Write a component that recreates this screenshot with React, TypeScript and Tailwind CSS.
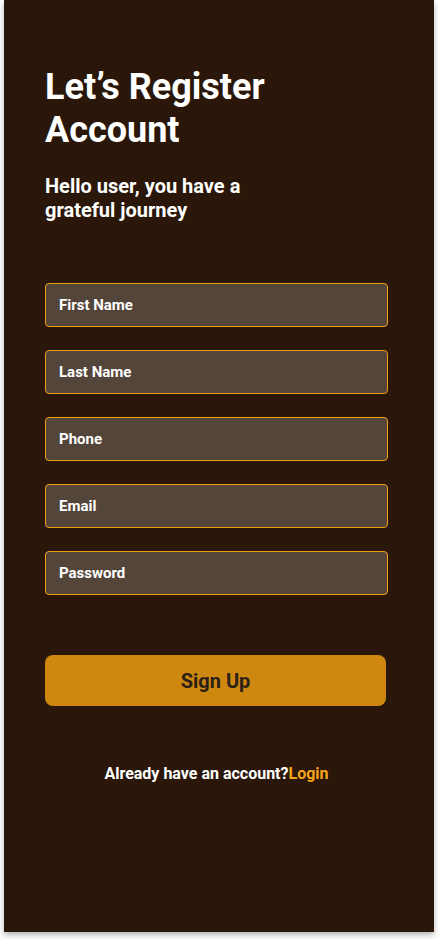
export default function App() {
  const fields = ["First Name", "Last Name", "Phone", "Email", "Password"];

  return (
    <div className="min-h-[940px] bg-white" style={{ fontFamily: "Roboto, 'Noto Sans', sans-serif" }}>
      <div className="ml-[4px] h-[932px] w-[430px] bg-[#2a1709] px-[41px] pt-[66px] shadow-[0_3px_6px_rgba(0,0,0,0.3)]">
        {/* Heading */}
        <h1 className="w-[260px] text-[36px] font-bold leading-[43px] text-white">
          Let’s Register Account
        </h1>
        <p className="mt-[22px] w-[240px] text-[20px] font-bold leading-6 text-white">
          Hello user, you have a grateful journey
        </p>

        {/* Fields */}
        <div className="mt-[61px] flex w-[343px] flex-col gap-[23px]">
          {fields.map((f) => (
            <div
              key={f}
              className="flex h-[44px] items-center rounded-[4px] border border-[#efa012] bg-[#54453b] px-[13px] text-[15px] font-bold text-white"
            >
              {f}
            </div>
          ))}
        </div>

        {/* Button */}
        <button className="mt-[60px] flex h-[51px] w-[341px] items-center justify-center rounded-[8px] bg-[#cf880f] text-[20px] font-bold text-[#2b2118]">
          Sign Up
        </button>

        <p className="mt-[58px] w-[343px] text-center text-[16px] font-bold leading-5 text-white">
          Already have an account?<span className="text-[#f5a41b]">Login</span>
        </p>
      </div>
    </div>
  );
}
